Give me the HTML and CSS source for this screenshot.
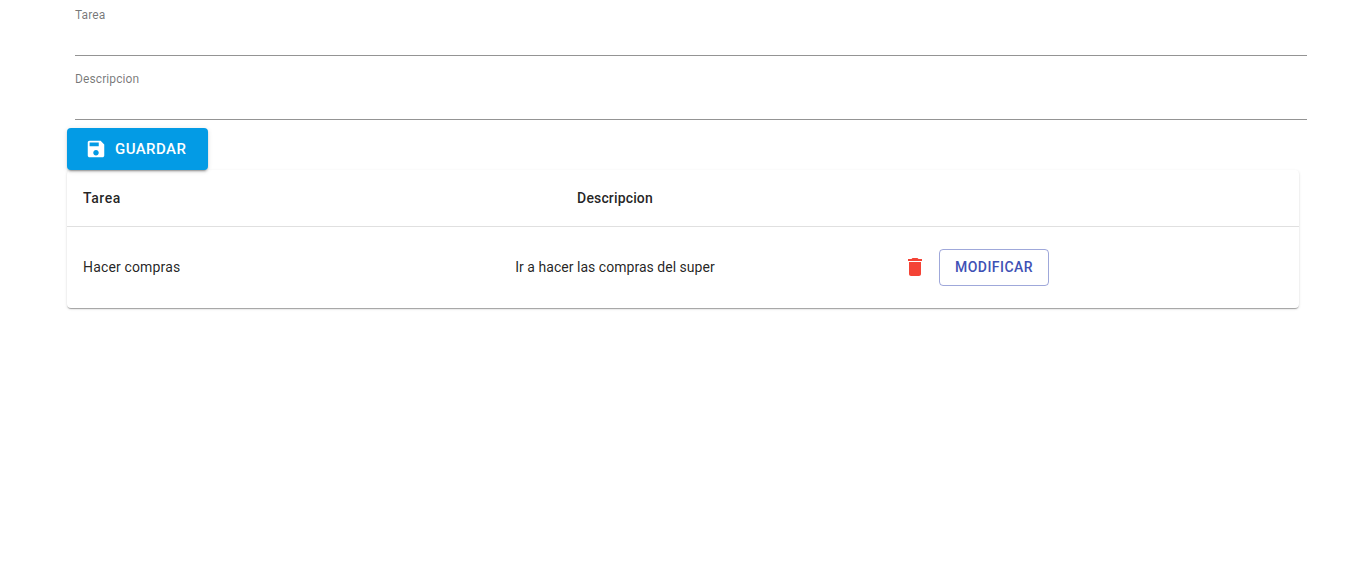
FILE: index.html
```html
<!DOCTYPE html>
<html lang="es">
<head>
<meta charset="utf-8">
<title>Tareas</title>
<link rel="stylesheet" href="styles.css">
</head>
<body>
<main class="container">
  <form class="form">
    <div class="field"><label class="label">Tarea</label></div>
    <div class="field"><label class="label">Descripcion</label></div>
    <button type="button" class="btn-save"><svg class="icon-save" viewBox="0 0 24 24"><path d="M17 3H5c-1.11 0-2 .9-2 2v14c0 1.1.89 2 2 2h14c1.1 0 2-.9 2-2V7l-4-4zm-5 16c-1.66 0-3-1.34-3-3s1.34-3 3-3 3 1.34 3 3-1.34 3-3 3zm3-10H5V5h10v4z"/></svg>Guardar</button>
  </form>
  <section class="paper">
    <div class="row row-head"><div class="cell name">Tarea</div><div class="cell mid">Descripcion</div><div class="cell"></div></div>
    <div class="row row-task"><div class="cell name">Hacer compras</div><div class="cell mid">Ir a hacer las compras del super</div><div class="cell actions"><svg class="icon-delete" viewBox="0 0 24 24"><path d="M6 19c0 1.1.9 2 2 2h8c1.1 0 2-.9 2-2V7H6v12zM19 4h-3.5l-1-1h-5l-1 1H5v2h14V4z"/></svg><button type="button" class="btn-edit">Modificar</button></div></div>
  </section>
</main>
</body>
</html>
```
FILE: styles.css
```css
* { box-sizing: border-box; }
body { margin: 0; min-height: 100vh; background: #fff; font-family: Roboto, sans-serif; color: rgba(0,0,0,.87); }
.container { width: 1232px; margin-left: 67px; }
.form { position: relative; z-index: 1; padding-top: 8px; }
.field { width: 1232px; height: 48px; margin: 0 0 16px 8px; padding-top: 1px; border-bottom: 1px solid #949494; }
.field:nth-of-type(2) { margin-bottom: 8px; }
.label { display: block; font-size: 12px; line-height: 12px; letter-spacing: .11px; color: rgba(0,0,0,.54); }
.btn-save { display: flex; align-items: center; width: 141px; height: 42px; padding: 0 0 0 18px; border: 0; border-radius: 4px; background: #039be5; color: #fff; font: 500 15px/26px Roboto, sans-serif; letter-spacing: .43px; text-transform: uppercase; box-shadow: 0 3px 1px -2px rgba(0,0,0,.2), 0 2px 2px 0 rgba(0,0,0,.14), 0 1px 5px 0 rgba(0,0,0,.12); }
.icon-save { width: 22px; height: 22px; margin-right: 8px; fill: #fff; }
.paper { height: 138px; border-radius: 4px; background: #fff; box-shadow: 0 2px 1px -1px rgba(0,0,0,.2), 0 1px 1px 0 rgba(0,0,0,.14), 0 1px 3px 0 rgba(0,0,0,.12); }
.row { display: grid; grid-template-columns: 282px 532px 1fr; align-items: center; font-size: 14px; letter-spacing: .15px; }
.cell { padding: 0 16px; }
.mid { text-align: center; }
.row-head { height: 57px; border-bottom: 1px solid #e0e0e0; font-weight: 500; }
.row-head .name { letter-spacing: .55px; }
.row-task { height: 80px; }
.row-task .mid { letter-spacing: .03px; }
.actions { display: flex; align-items: center; gap: 12px; padding-left: 22px; }
.icon-delete { width: 24px; height: 24px; fill: #f44336; }
.btn-edit { width: 110px; height: 37px; padding: 0; border: 1px solid rgba(63,81,181,.5); border-radius: 4px; background: transparent; color: #3f51b5; font: 500 14px/24px Roboto, sans-serif; letter-spacing: .46px; text-transform: uppercase; }
```
